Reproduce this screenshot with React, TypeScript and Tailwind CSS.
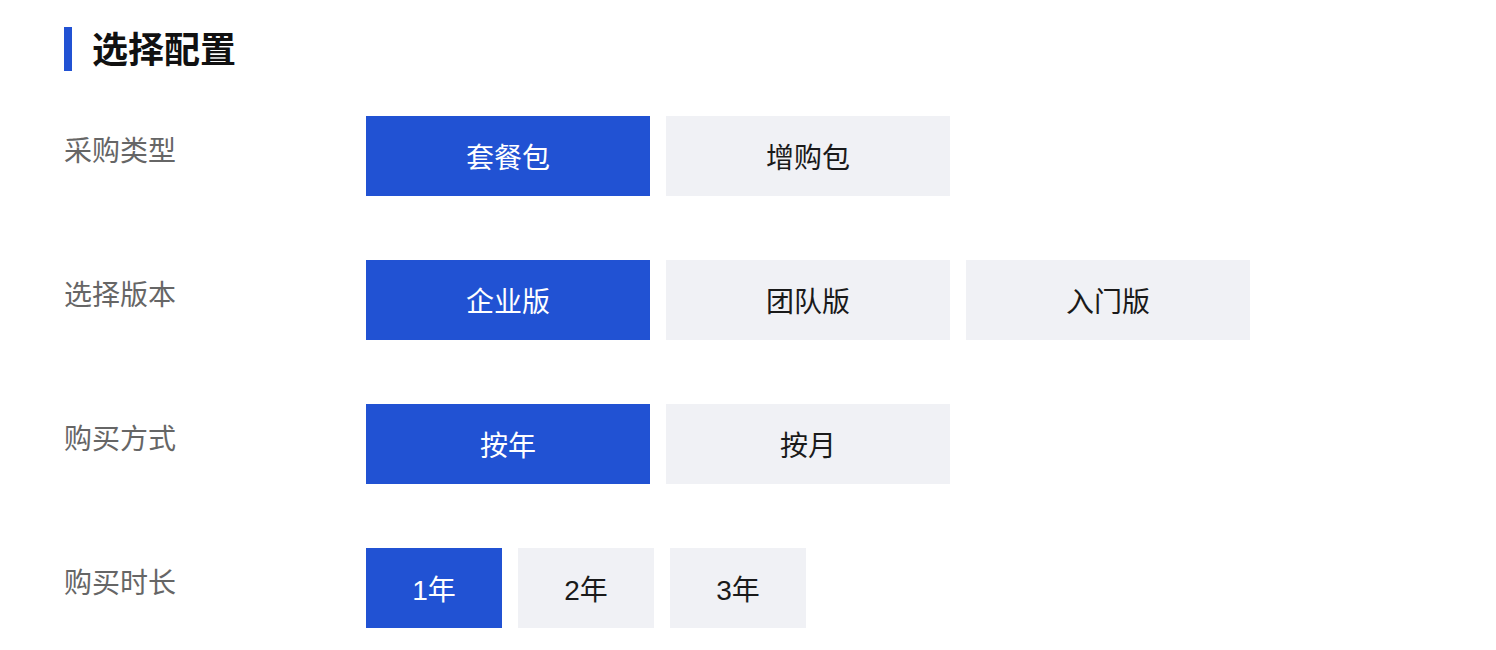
import { useState } from "react";

type Row = {
  label: string;
  options: string[];
  width: string;
};

const rows: Row[] = [
  { label: "采购类型", options: ["套餐包", "增购包"], width: "w-[284px]" },
  { label: "选择版本", options: ["企业版", "团队版", "入门版"], width: "w-[284px]" },
  { label: "购买方式", options: ["按年", "按月"], width: "w-[284px]" },
  { label: "购买时长", options: ["1年", "2年", "3年"], width: "w-[136px]" },
];

export default function App() {
  const [picked, setPicked] = useState<number[]>([0, 0, 0, 0]);

  return (
    <div className="min-h-[650px] bg-white pl-16 pt-[27px] font-['Liberation_Sans','Noto_Sans_CJK_SC',sans-serif]">
      <div className="flex h-11 items-center">
        <span className="h-11 w-2 bg-[#2152d3]" />
        <h1 className="ml-5 pt-1 text-[36px] font-bold leading-none text-[#111]">选择配置</h1>
      </div>

      <div className="mt-[45px] flex flex-col gap-16">
        {rows.map((row, ri) => (
          <div key={row.label} className="flex items-start">
            <div className="w-[302px] pt-4 text-[28px] leading-10 text-[#666]">{row.label}</div>
            <div className="flex gap-4">
              {row.options.map((opt, oi) => {
                const active = picked[ri] === oi;
                return (
                  <button
                    key={opt}
                    type="button"
                    onClick={() => setPicked((p) => p.map((v, i) => (i === ri ? oi : v)))}
                    className={`${row.width} flex h-20 items-center justify-center pt-1.5 text-[28px] ${
                      active ? "bg-[#2152d3] text-white" : "bg-[#f0f1f5] text-[#1a1a1a]"
                    }`}
                  >
                    {opt}
                  </button>
                );
              })}
            </div>
          </div>
        ))}
      </div>
    </div>
  );
}
